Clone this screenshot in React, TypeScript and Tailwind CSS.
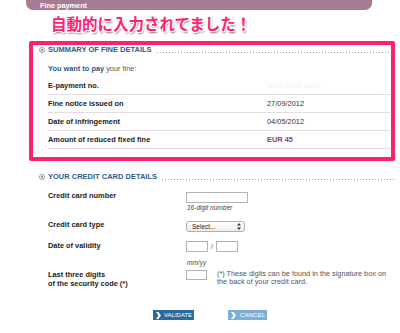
import React from "react";

function SectionHeader({ title }: { title: string }) {
  return (
    <div className="flex h-[10px] items-center">
      <svg width="6" height="6" viewBox="0 0 6 6" className="ml-[6px] mr-[3px] shrink-0">
        <circle cx="3" cy="3" r="2.5" fill="none" stroke="#7b93ad" strokeWidth="0.9" />
        <circle cx="3" cy="3" r="1" fill="#c0506a" />
      </svg>
      <span className="whitespace-nowrap text-[7.5px] font-bold leading-[10px] text-[#2c5e8b]">{title}</span>
      <div className="ml-[5px] mt-[5px] h-[1px] flex-1 bg-[linear-gradient(to_right,#8ea6bf_1px,transparent_1px)] bg-[length:3px_1px]" />
    </div>
  );
}

function Row({ label, value, valueClass }: { label: string; value: string; valueClass?: string }) {
  return (
    <div className="flex h-[18px] items-center border-b border-[#e6dde2]">
      <div className="w-[219px] text-[7.4px] font-bold leading-[9px] text-[#222]">{label}</div>
      <div className={valueClass ?? "text-[7.4px] leading-[9px] text-[#333]"}>{value}</div>
    </div>
  );
}

function Chevron() {
  return (
    <svg width="5" height="7" viewBox="0 0 5 7" className="shrink-0">
      <polygon points="0,0 2.4,0 5,3.5 2.4,7 0,7 2.6,3.5" fill="#ffffff" />
    </svg>
  );
}

export default function App() {
  return (
    <div className="h-[333px] w-[400px] overflow-hidden bg-white font-[family-name:'Liberation_Sans',Arial,sans-serif]">
      {/* Header bar */}
      <div className="ml-[26px] flex h-[10px] w-[346px] items-center rounded-b-[7px] bg-[#a67b93] pl-[14px]">
        <span className="text-[7.3px] font-bold leading-[9px] text-white">Fine payment</span>
      </div>

      {/* Japanese title */}
      <div className="ml-[51px] mt-[3px] h-[20px] whitespace-nowrap font-[family-name:'Noto_Sans_CJK_JP',sans-serif] text-[15.5px] font-bold leading-[20px] text-[#ff2374] [text-shadow:-1px_-1px_0_#fff,1px_-1px_0_#fff,-1px_1px_0_#fff,1px_1px_0_#fff,0_-1px_0_#fff,0_1px_0_#fff,-1px_0_0_#fff,1px_0_0_#fff,1px_2px_2px_rgba(0,0,0,0.55)]">
        自動的に入力されてました！
      </div>

      {/* Pink summary box */}
      <div className="ml-[29px] mt-[8px] w-[366px] rounded-[2px] border-4 border-[#ff1f6e] pb-[8px]">
        <SectionHeader title="SUMMARY OF FINE DETAILS" />
        <div className="ml-[15px] mr-[1px]">
          <div className="flex h-[22px] items-center pt-[4px] text-[7.4px] leading-[9px]">
            <span className="font-bold text-[#1f5a8f]">You want to pay</span>
            <span className="ml-[2px] text-[#555]">your fine:</span>
          </div>
          <Row label="E-payment no." value="0000 0000 0000" valueClass="text-[7.4px] leading-[9px] text-[#f1f1f1]" />
          <Row label="Fine notice issued on" value="27/09/2012" />
          <Row label="Date of infringement" value="04/05/2012" />
          <Row
            label="Amount of reduced fixed fine"
            value="EUR 45"
            valueClass="text-[7.4px] font-bold leading-[9px] text-[#8a3f74]"
          />
        </div>
      </div>

      {/* Credit card section */}
      <div className="ml-[33px] mr-[5px] mt-[11px]">
        <SectionHeader title="YOUR CREDIT CARD DETAILS" />
        <div className="ml-[15px]">
          {/* Row 1 */}
          <div className="mt-[9px] flex">
            <div className="w-[138px] text-[7.4px] font-bold leading-[9px] text-[#222]">Credit card number</div>
            <div className="flex flex-col">
              <div className="mt-[1px] h-[11px] w-[62px] border border-[#b3b3b3] bg-white" />
              <div className="pl-[1px] text-[6.5px] italic leading-[9px] text-[#444]">16-digit number</div>
            </div>
          </div>
          {/* Row 2 */}
          <div className="mt-[8px] flex">
            <div className="w-[138px] text-[7.4px] font-bold leading-[9px] text-[#222]">Credit card type</div>
            <div className="mt-[1px] flex h-[11px] w-[59px] items-center justify-between rounded-[3px] border border-[#b0b0b0] bg-[linear-gradient(#ffffff,#ececec)] pl-[5px] pr-[3px]">
              <span className="text-[6.5px] leading-[8px] text-[#222]">Select...</span>
              <svg width="4" height="7" viewBox="0 0 4 7">
                <polygon points="2,0 4,2.6 0,2.6" fill="#333" />
                <polygon points="2,7 4,4.4 0,4.4" fill="#333" />
              </svg>
            </div>
          </div>
          {/* Row 3 */}
          <div className="mt-[9px] flex">
            <div className="w-[138px] text-[7.4px] font-bold leading-[9px] text-[#222]">Date of validity</div>
            <div className="flex flex-col">
              <div className="flex items-center">
                <div className="h-[11px] w-[22px] border border-[#b3b3b3] bg-white" />
                <span className="w-[8px] text-center text-[7px] leading-[9px] text-[#444]">/</span>
                <div className="h-[11px] w-[22px] border border-[#b3b3b3] bg-white" />
              </div>
              <div className="mt-[6px] pl-[1px] text-[6.5px] italic leading-[9px] text-[#444]">mm/yy</div>
            </div>
          </div>
          {/* Row 4 */}
          <div className="mt-[3px] flex">
            <div className="w-[138px] text-[7.4px] font-bold leading-[9px] text-[#222]">
              Last three digits
              <br />
              of the security code (*)
            </div>
            <div className="h-[10px] w-[21px] shrink-0 border border-[#b3b3b3] bg-white" />
            <div className="ml-[10px] w-[178px] text-[7.3px] leading-[8px] text-[#555]">
              (*) These digits can be found in the signature box on the back of your credit card.
            </div>
          </div>
          {/* Buttons */}
          <div className="ml-[105px] mt-[22px] flex">
            <div className="flex h-[10px] w-[41px] items-center gap-[3px] bg-[#2a6b9b] pl-[3px]">
              <Chevron />
              <span className="text-[6px] leading-[8px] text-white">VALIDATE</span>
            </div>
            <div className="ml-[34px] flex h-[10px] w-[39px] items-center gap-[4px] bg-[#7eaed6] pl-[3px]">
              <Chevron />
              <span className="text-[6.2px] leading-[8px] text-white">CANCEL</span>
            </div>
          </div>
        </div>
      </div>
    </div>
  );
}
